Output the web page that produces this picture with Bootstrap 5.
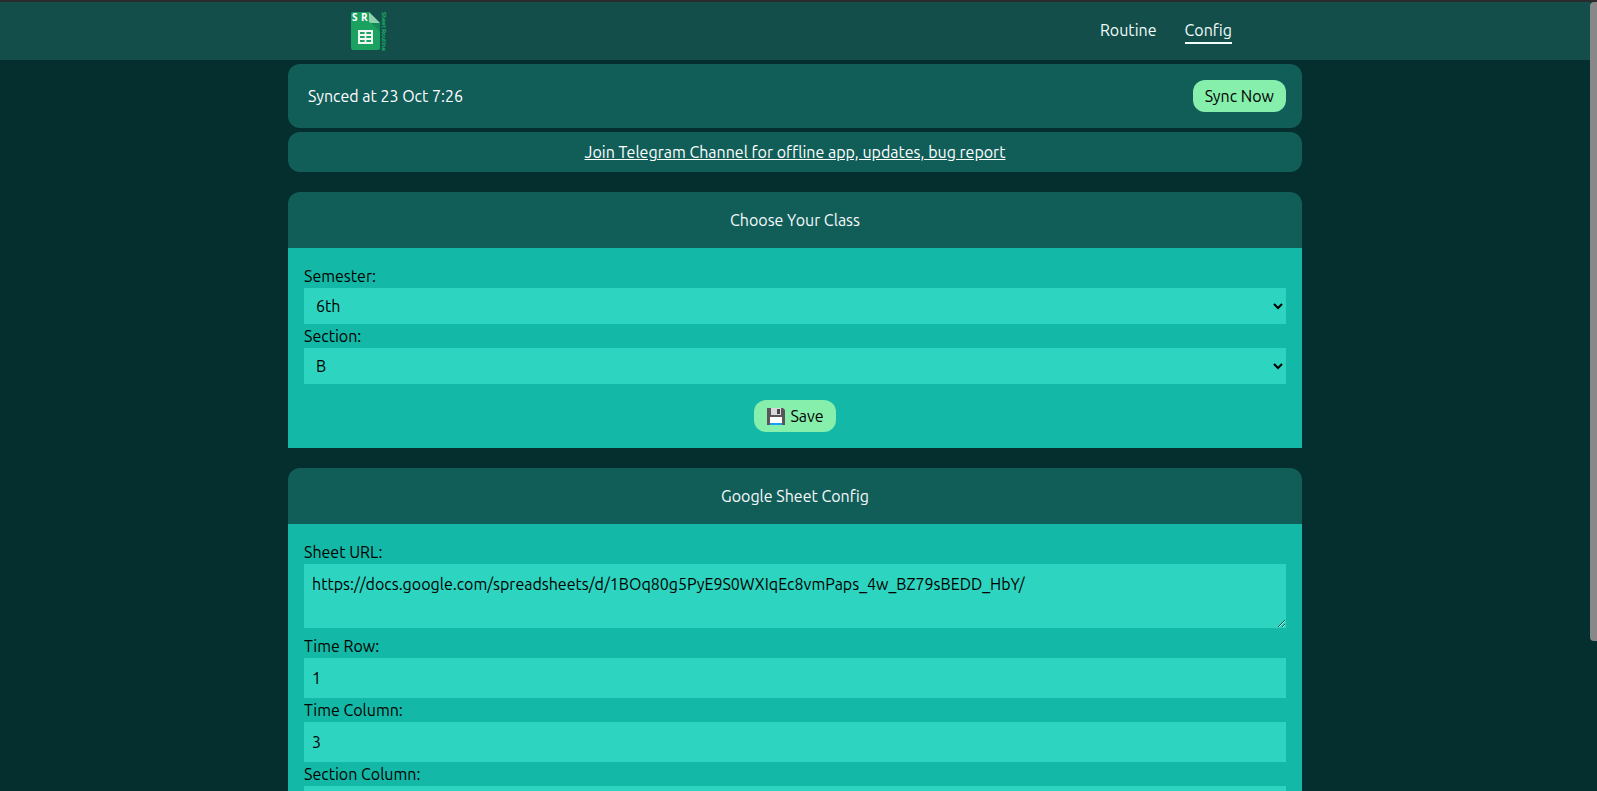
<!DOCTYPE html>
<html lang="en">
<head>
<meta charset="utf-8">
<meta name="viewport" content="width=device-width, initial-scale=1">
<title>Sheet Routine</title>
<link rel="stylesheet" href="https://cdn.jsdelivr.net/npm/bootstrap@5.3.0/dist/css/bootstrap.min.css">
<style>
  body { font-family: Ubuntu, "Noto Sans", sans-serif; font-size: 16px; line-height: 24px; background: #042f2e; color: #f8fafc; border-top: 2px solid #2b2a2d; }
  .page-width { width: 100%; max-width: 1014px; margin-inline: auto; }
  .top-nav { background: #134e4a; height: 58px; }
  .top-nav .page-width { padding: 0 70px 0 62px; }
  .top-nav a { color: #f0fdfa; text-decoration: none; border-bottom: 2px solid transparent; line-height: 24px; }
  .top-nav a.active { border-color: #f0fdfa; }
  .nav-links { gap: 28px; }
  .panel { background: #115e59; border-radius: 12px; }
  .panel-text { color: #fff; }
  .sync-row { padding: 16px 16px 16px 20px; }
  .sections { gap: 20px; margin-top: 20px; }
  .panel-head { background: #115e59; border-radius: 12px 12px 0 0; }
  .panel-form { background: #14b8a6; color: #000; }
  .pill-btn { background: #86efac; color: #000; border: 0; border-radius: 12px; padding: 4px 12px; }
  .field { display: block; width: 100%; background: #2dd4bf; color: #000; border: 0; border-radius: 0; padding: 8px; }
  select.field { height: 36px; }
  textarea.field { height: 64px; margin-bottom: 6px; resize: both; }
  .view { scrollbar-width: none; }
  .view::-webkit-scrollbar { display: none; }
  .rail { width: 7px; background: #042f2e; }
  .rail-thumb { height: 81%; background: #888; border-radius: 4px 0 0 4px; }
</style>
</head>
<body class="vh-100 d-flex overflow-hidden">
<div class="view flex-fill overflow-auto">
  <nav class="top-nav">
    <div class="page-width h-100 d-flex align-items-center justify-content-between">
      <a href="#" class="d-flex border-0" aria-label="Sheet Routine">
        <svg width="40" height="40" viewBox="0 0 40 40">
          <path d="M3 1H19L30 12V37Q30 39 28 39H3Q1 39 1 37V3Q1 1 3 1Z" fill="#1ba261"/>
          <path d="M20 11L30 21V12Z" fill="#168a54"/>
          <path d="M19 1L30 12H21Q19 12 19 10Z" fill="#8ed1b1"/>
          <path d="M8 19H23V33H8ZM10 21V23H14.600V21ZM16.400 21V23H21V21ZM10 25V27H14.600V25ZM16.400 25V27H21V25ZM10 29V31H14.600V29ZM16.400 29V31H21V29Z" fill="#f1f8f4" fill-rule="evenodd"/>
          <text x="2" y="10" font-family="Open Sans, sans-serif" font-weight="700" font-size="10" fill="#fff">S</text>
          <text x="11" y="10" font-family="Open Sans, sans-serif" font-weight="700" font-size="10" fill="#fff">R</text>
          <text transform="translate(32 1) rotate(90)" font-family="Ubuntu, sans-serif" font-weight="500" font-size="6" fill="#1ba261" stroke="#1ba261" stroke-width=".3">Sheet Routine</text>
        </svg>
      </a>
      <div class="nav-links d-flex">
        <a href="#routine">Routine</a>
        <a href="#config" class="active" aria-current="page">Config</a>
      </div>
    </div>
  </nav>

  <main class="page-width pb-5">
    <div class="panel sync-row d-flex align-items-center justify-content-between mt-1">
      <span class="panel-text">Synced at 23 Oct 7:26</span>
      <button type="button" class="pill-btn">Sync Now</button>
    </div>
    <div class="panel text-center p-2 mt-1">
      <a href="#telegram" class="panel-text">Join Telegram Channel for offline app, updates, bug report</a>
    </div>

    <div class="sections d-flex flex-column">
      <section>
        <div class="panel-head text-center p-3">Choose Your Class</div>
        <form class="panel-form p-3">
          <label class="d-block" for="semester">Semester:</label>
          <select class="field" id="semester"><option>6th</option></select>
          <label class="d-block" for="section">Section:</label>
          <select class="field" id="section"><option>B</option></select>
          <button type="button" class="pill-btn d-flex align-items-center gap-1 mx-auto mt-3">
            <svg width="20" height="20" viewBox="0 0 20 20" aria-hidden="true">
              <path d="M1 2H17L19 4V19H1Z" fill="#5a5557"/>
              <path d="M5 2H15V9H5Z" fill="#d8d8dc"/>
              <path d="M11 3H14V8H11Z" fill="#4a4548"/>
              <path d="M4 11H16V17H4Z" fill="#fff"/>
              <path d="M4 17H16V19H4Z" fill="#1e9df0"/>
            </svg>Save</button>
        </form>
      </section>

      <section>
        <div class="panel-head text-center p-3">Google Sheet Config</div>
        <form class="panel-form p-3">
          <label class="d-block" for="url">Sheet URL:</label>
          <textarea class="field" id="url" spellcheck="false">https://docs.google.com/spreadsheets/d/1BOq80g5PyE9S0WXIqEc8vmPaps_4w_BZ79sBEDD_HbY/</textarea>
          <label class="d-block" for="time-row">Time Row:</label>
          <input class="field" id="time-row" value="1">
          <label class="d-block" for="time-col">Time Column:</label>
          <input class="field" id="time-col" value="3">
          <label class="d-block" for="section-col">Section Column:</label>
          <input class="field" id="section-col">
        </form>
      </section>
    </div>
  </main>
</div>
<div class="rail flex-shrink-0"><div class="rail-thumb"></div></div>
<script src="https://cdn.jsdelivr.net/npm/bootstrap@5.3.0/dist/js/bootstrap.bundle.min.js"></script>
</body>
</html>
